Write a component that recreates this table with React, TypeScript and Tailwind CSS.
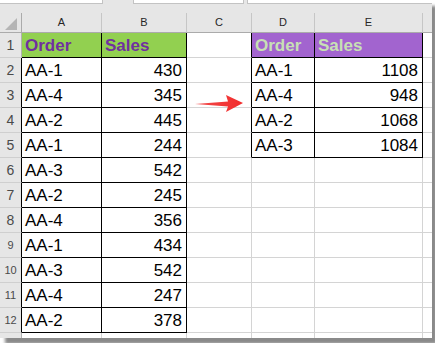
import React from "react";

const t1: [string, number][] = [
  ["AA-1", 430],
  ["AA-4", 345],
  ["AA-2", 445],
  ["AA-1", 244],
  ["AA-3", 542],
  ["AA-2", 245],
  ["AA-4", 356],
  ["AA-1", 434],
  ["AA-3", 542],
  ["AA-4", 247],
  ["AA-2", 378],
];

const t2: [string, number][] = [
  ["AA-1", 1108],
  ["AA-4", 948],
  ["AA-2", 1068],
  ["AA-3", 1084],
];

const letters = ["", "A", "B", "C", "D", "E", ""];

function inTable(r: number, c: number) {
  const a = r >= 1 && r <= 12 && (c === 1 || c === 2);
  const b = r >= 1 && r <= 5 && (c === 4 || c === 5);
  return a || b;
}

function Cell({ r, c }: { r: number; c: number }) {
  // header row
  if (r === 0) {
    if (c === 0) {
      return (
        <div className="h-[20px] border-r border-b border-r-[#ababab] border-b-[#ababab] bg-[#e6e6e6] relative">
          <svg width="21" height="19" className="block">
            <polygon points="17,5 17,17 5,17" fill="#b5b5b5" />
          </svg>
        </div>
      );
    }
    if (c === 6) {
      return <div className="h-[20px] border-b border-b-[#ababab] bg-[#e6e6e6]" />;
    }
    return (
      <div className="h-[20px] border-r border-b border-r-[#c6c6c6] border-b-[#ababab] bg-[#e6e6e6] flex items-center justify-center text-[11px] text-[#262626]">
        {letters[c]}
      </div>
    );
  }

  const last = r === 13;
  const hCls = last ? "h-[5px]" : "h-[25px]";

  if (c === 0) {
    const rightBlack = r >= 2 && r <= 12;
    const small = r >= 9;
    return (
      <div
        className={
          (last ? "h-[5px] " : "h-[25px] border-b border-b-[#cfcfcf] ") +
          (rightBlack ? "border-r border-r-black " : "border-r border-r-[#b0b0b0] ") +
          "bg-[#e6e6e6] flex items-center justify-center text-[#4a4a4a] " +
          (small ? "text-[11px]" : "text-[14px]")
        }
      >
        {last ? "" : r}
      </div>
    );
  }

  const rb = inTable(r, c) || inTable(r, c + 1);
  const bb = inTable(r, c);
  const isT1Head = r === 1 && (c === 1 || c === 2);
  const isT2Head = r === 1 && (c === 4 || c === 5);

  let cls = hCls + " ";
  if (c !== 6) cls += rb ? "border-r border-r-black " : "border-r border-r-[#d4d4d4] ";
  if (!last) cls += bb ? "border-b border-b-black " : "border-b border-b-[#d4d4d4] ";
  if (isT1Head) cls += "bg-[#92d050] ";
  else if (isT2Head) cls += "bg-[#a264cf] ";
  else cls += "bg-white ";

  let content: React.ReactNode = null;
  if (isT1Head || isT2Head) {
    const label = c === 1 || c === 4 ? "Order" : "Sales";
    content = (
      <span
        className={
          "block pl-[3px] leading-[25px] font-bold text-[17px] " +
          (isT1Head ? "text-[#7030a0]" : "text-[#c8e0b4]")
        }
      >
        {label}
      </span>
    );
  } else if (r >= 2 && r <= 12 && (c === 1 || c === 2)) {
    const row = t1[r - 2];
    content =
      c === 1 ? (
        <span className="block pl-[3px] leading-[25px] text-[17px] text-black">{row[0]}</span>
      ) : (
        <span className="block pr-[4px] text-right leading-[25px] text-[17px] text-black">{row[1]}</span>
      );
  } else if (r >= 2 && r <= 5 && (c === 4 || c === 5)) {
    const row = t2[r - 2];
    content =
      c === 4 ? (
        <span className="block pl-[3px] leading-[25px] text-[17px] text-black">{row[0]}</span>
      ) : (
        <span className="block pr-[4px] text-right leading-[25px] text-[17px] text-black">{row[1]}</span>
      );
  }

  return <div className={cls + "overflow-hidden whitespace-nowrap"}>{content}</div>;
}

export default function App() {
  const rows = Array.from({ length: 14 }, (_, i) => i);
  const cols = Array.from({ length: 7 }, (_, i) => i);
  return (
    <div className="w-[435px] h-[343px] bg-white overflow-hidden font-['Liberation_Sans',Arial,sans-serif]">
      <div className="w-[432px] h-[338px] bg-white shadow-[5px_6px_3px_#8a8a8a] flex flex-col overflow-hidden">
        {/* formula bar remnant */}
        <div className="h-[13px] bg-[#e6e6e6] flex items-start">
          <div className="w-[103px] h-[4px] bg-white border-r border-b border-[#c3c3c3]" />
          <div className="ml-[30px] w-[111px] h-[4px] bg-white border-l border-r border-b border-[#c3c3c3]" />
          <div className="ml-[3px] flex-1 h-[4px] bg-white border-l border-b border-[#c3c3c3]" />
        </div>
        {/* grid */}
        <div className="relative grid grid-cols-[22px_80px_85px_65px_63px_108px_9px]">
          {rows.map((r) =>
            cols.map((c) => <Cell key={r + "-" + c} r={r} c={c} />)
          )}
          <svg
            className="absolute left-[194px] top-[80px]"
            width="52"
            height="22"
            viewBox="0 0 52 22"
          >
            <defs>
              <linearGradient id="ag" x1="0" y1="0" x2="1" y2="0">
                <stop offset="0" stopColor="#f24a4a" />
                <stop offset="1" stopColor="#f22c2c" />
              </linearGradient>
            </defs>
            <polygon
              points="1,11 34,8.5 32,2 49,10 32,19 34,13.5"
              fill="url(#ag)"
            />
          </svg>
        </div>
      </div>
    </div>
  );
}
